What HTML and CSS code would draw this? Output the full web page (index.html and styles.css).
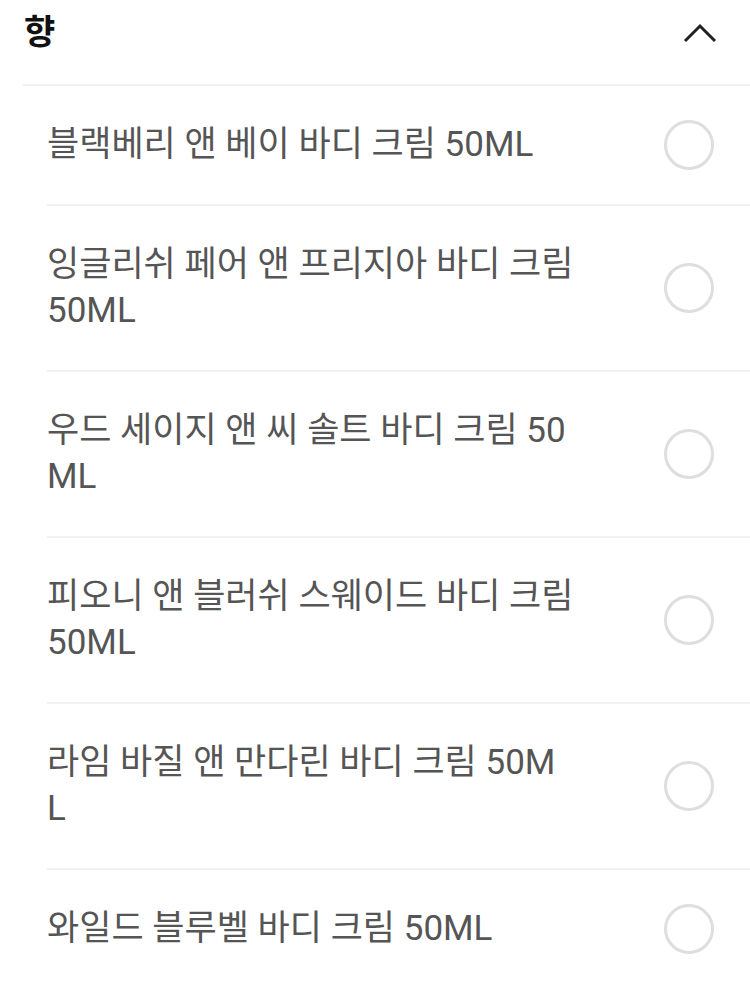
FILE: index.html
```html
<!DOCTYPE html>
<html lang="ko">
<head>
  <meta charset="UTF-8" />
  <meta name="viewport" content="width=device-width, initial-scale=1.0" />
  <title>향</title>
  <link rel="stylesheet" href="styles.css">
</head>
<body>

<div id="optionPanel">
  <div class="panel-header">
    <h2>향</h2>
    <svg class="chevron" width="34" height="22" viewBox="0 0 34 22">
      <polyline points="2,19 17,4 32,19" fill="none" stroke="#222" stroke-width="3" />
    </svg>
  </div>

  <ul class="option-list">
    <li class="option-row">
      <span class="option-name">블랙베리 앤 베이 바디 크림 50ML</span>
      <span class="radio"></span>
    </li>
    <li class="option-row">
      <span class="option-name">잉글리쉬 페어 앤 프리지아 바디 크림 50ML</span>
      <span class="radio"></span>
    </li>
    <li class="option-row">
      <span class="option-name">우드 세이지 앤 씨 솔트 바디 크림 50ML</span>
      <span class="radio"></span>
    </li>
    <li class="option-row">
      <span class="option-name">피오니 앤 블러쉬 스웨이드 바디 크림 50ML</span>
      <span class="radio"></span>
    </li>
    <li class="option-row">
      <span class="option-name">라임 바질 앤 만다린 바디 크림 50ML</span>
      <span class="radio"></span>
    </li>
    <li class="option-row">
      <span class="option-name">와일드 블루벨 바디 크림 50ML</span>
      <span class="radio"></span>
    </li>
  </ul>
</div>

</body>
</html>
```

FILE: styles.css
```css
body, html {
  margin: 0;
  background: #fff;
  font-family: Roboto, "Noto Sans CJK KR", sans-serif;
}

#optionPanel {
  margin-left: 23px;
}

.panel-header {
  display: flex;
  justify-content: space-between;
  align-items: center;
  height: 66px;
  padding: 0 33px 18px 1px;
  border-bottom: 2px solid #f1f1f1;
}

.panel-header h2 {
  margin: 0;
  padding-bottom: 6px;
  font-family: "Noto Sans CJK KR", sans-serif;
  font-size: 34px;
  font-weight: bold;
  color: #111;
  line-height: 1;
}

.chevron {
  display: block;
}

.option-list {
  list-style: none;
  margin: 0 0 0 24px;
  padding: 0;
}

.option-row {
  display: flex;
  align-items: center;
  justify-content: space-between;
  padding: 36px 36px 36px 0;
  border-bottom: 2px solid #f1f1f1;
}

.option-row:last-child {
  border-bottom: none;
}

.option-name {
  width: 527px;
  font-size: 35px;
  line-height: 46px;
  color: #555;
  word-break: break-all;
}

.radio {
  width: 44px;
  height: 44px;
  margin: -2px 0;
  border: 3px solid #dedede;
  border-radius: 50%;
  flex-shrink: 0;
}
```
